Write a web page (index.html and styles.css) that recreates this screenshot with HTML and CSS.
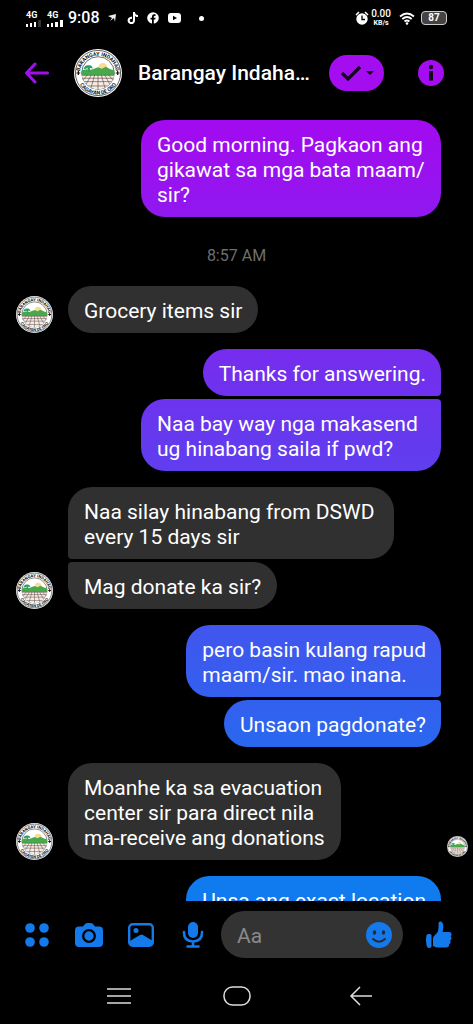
FILE: index.html
```html
<!DOCTYPE html>
<html lang="ceb">
<head>
    <meta charset="UTF-8">
    <meta name="viewport" content="width=device-width, initial-scale=1.0">
    <title>Barangay Indaha…</title>
    <link rel="stylesheet" href="styles.css">
</head>
<body>
    <!-- Seal used for every avatar -->
    <svg class="defs" width="0" height="0" aria-hidden="true">
        <defs>
            <path id="arc-top" d="M12 52A38 38 0 0 1 88 52"/>
            <path id="arc-bottom" d="M5 50A45 45 0 0 0 95 50"/>
            <clipPath id="seal-clip"><circle cx="50" cy="50" r="34"/></clipPath>
        </defs>
        <symbol id="seal" viewBox="0 0 100 100">
            <circle cx="50" cy="50" r="50" fill="#fff"/>
            <circle cx="50" cy="50" r="47" fill="none" stroke="#222" stroke-width="1.500"/>
            <circle cx="50" cy="50" r="34" fill="#fff" stroke="#333" stroke-width="1.500"/>
            <g clip-path="url(#seal-clip)">
                <circle cx="60" cy="38" r="9" fill="#f8dc94"/>
                <path d="M10 54V46l16-4 10 1 14-5 8 3 8-4 10 5 14 4v8z" fill="#48a84c"/>
                <path d="M20 42q2-9 10-8 8-2 9 7l-6-2v9h-4v-8z" fill="#2f9f66"/>
                <path d="M10 54h80v34H10z" fill="#f5ece5"/>
                <path d="M10 55h80M10 61h80M10 68h80M10 77h80M50 54v34M43 54 34 87M57 54l9 33M36 54 18 87M64 54l18 33M28 54 0 87M72 54l28 33" fill="none" stroke="#5a4640" stroke-width="1.300"/>
            </g>
            <path d="M5 50h8M9 46v8M87 50h8M91 46v8" stroke="#111" stroke-width="2.500"/>
            <text class="seal-text"><textPath href="#arc-top" startOffset="50%" text-anchor="middle">BARANGAY INDAHAG</textPath></text>
            <text class="seal-text"><textPath href="#arc-bottom" startOffset="50%" text-anchor="middle">CAGAYAN DE ORO</textPath></text>
        </symbol>
    </svg>

    <div class="status-bar">
        <div class="signal">
            <span>4G</span>
            <svg width="16" height="7" viewBox="0 0 16 7"><path d="M0 4h2v3H0zM4 3h2v4H4zM8 2h2v5H8z" fill="#fff"/><path d="M12 0h3v7h-3z" fill="#333"/></svg>
        </div>
        <div class="signal">
            <span>4G</span>
            <svg width="16" height="7" viewBox="0 0 16 7"><path d="M0 4h2v3H0zM4 3h2v4H4zM8 2h3v5H8zM13 0h3v7h-3z" fill="#fff"/></svg>
        </div>
        <span class="clock">9:08</span>
        <div class="notifications">
            <svg width="10" height="10" viewBox="0 0 10 10"><path d="M0 3 8 1 7 9 6 5 2 8 4 5z" fill="#eee"/></svg>
            <svg width="11" height="12" viewBox="0 0 11 12"><path d="M6 0h2c0 2 1 3 3 3v2c-1 0-2 0-3-1v4.500A3.700 3.700 0 1 1 5 4.800V7a1.600 1.600 0 1 0 1 1.500z" fill="#fff"/></svg>
            <svg width="12" height="12" viewBox="0 0 12 12"><circle cx="6" cy="6" r="5.800" fill="#fff"/><path d="M5 12V7.500H3.500V5.800H5V4.500Q5 2.300 7 2.300h1.500v1.600h-1Q6.800 3.900 6.800 4.600v1.200h1.700l-.3 1.700H6.800V12z" fill="#000"/></svg>
            <svg width="13" height="10" viewBox="0 0 13 10"><rect width="13" height="10" rx="3" fill="#fff"/><path d="M5 2.800 9 5 5 7.200z" fill="#000"/></svg>
        </div>
        <span class="more-dot"></span>
        <div class="status-right">
            <svg width="14" height="14" viewBox="0 0 14 14"><circle cx="7" cy="8" r="5.700" fill="#fff"/><path d="M1 4 4 1M13 4l-3-3" stroke="#fff" stroke-width="1.500"/><path d="M7 4.500V8.500h3" fill="none" stroke="#000" stroke-width="1.300"/></svg>
            <div class="speed"><b>0.00</b><small>KB/s</small></div>
            <svg width="16" height="13" viewBox="0 0 16 13"><path d="M1 4.500Q8-1.500 15 4.500M3.300 7Q8 3 12.700 7M5.500 9.500Q8 7.500 10.500 9.500" fill="none" stroke="#fff" stroke-width="1.800"/><circle cx="8" cy="11.500" r="1.300" fill="#fff"/></svg>
            <div class="battery">87</div>
        </div>
    </div>

    <header class="header">
        <button class="icon-btn" aria-label="Back">
            <svg width="25" height="22" viewBox="0 0 25 22"><path d="M11 2 2.500 11 11 20M3 11h20.500" fill="none" stroke="#a010ec" stroke-width="3" stroke-linecap="round" stroke-linejoin="round"/></svg>
        </button>
        <svg class="avatar avatar-large"><use href="#seal"/></svg>
        <h1 class="title">Barangay Indaha…</h1>
        <button class="done-btn" aria-label="Mark as done">
            <svg width="34" height="18" viewBox="0 0 34 18"><path d="m2 9 6 6L20 3" fill="none" stroke="#14031c" stroke-width="3.200"/><path d="M26 7h8l-4 4z" fill="#14031c"/></svg>
        </button>
        <button class="icon-btn info-btn" aria-label="Info">
            <svg width="26" height="26" viewBox="0 0 26 26"><circle cx="13" cy="13" r="13" fill="#a40df0"/><circle cx="13" cy="7" r="2.200" fill="#14031c"/><path d="M11 11h4v9.500h-4z" fill="#14031c"/></svg>
        </button>
    </header>

    <main class="chat">
        <div class="group out">
            <p class="bubble">Good morning. Pagkaon ang gikawat sa mga bata maam/<wbr>sir?</p>
        </div>

        <time class="timestamp">8:57 AM</time>

        <div class="group in">
            <svg class="avatar"><use href="#seal"/></svg>
            <div class="stack">
                <p class="bubble">Grocery items sir</p>
            </div>
        </div>

        <div class="group out">
            <p class="bubble">Thanks for answering.</p>
            <p class="bubble">Naa bay way nga makasend ug hinabang saila if pwd?</p>
        </div>

        <div class="group in">
            <svg class="avatar"><use href="#seal"/></svg>
            <div class="stack">
                <p class="bubble">Naa silay hinabang from DSWD every 15 days sir</p>
                <p class="bubble">Mag donate ka sir?</p>
            </div>
        </div>

        <div class="group out">
            <p class="bubble">pero basin kulang rapud<br>maam/sir. mao inana.</p>
            <p class="bubble">Unsaon pagdonate?</p>
        </div>

        <div class="group in">
            <svg class="avatar"><use href="#seal"/></svg>
            <div class="stack">
                <p class="bubble">Moanhe ka sa evacuation<br>center sir para direct nila<br>ma-receive ang donations</p>
            </div>
            <svg class="avatar seen"><use href="#seal"/></svg>
        </div>

        <div class="group out">
            <p class="bubble">Unsa ang exact location</p>
        </div>
    </main>

    <form class="composer">
        <button type="button" class="icon-btn" aria-label="More">
            <svg width="24" height="24" viewBox="0 0 24 24" fill="#1479ea"><circle cx="5" cy="5" r="4.800"/><circle cx="19" cy="5" r="4.800"/><circle cx="5" cy="19" r="4.800"/><circle cx="19" cy="19" r="4.800"/></svg>
        </button>
        <button type="button" class="icon-btn" aria-label="Camera">
            <svg width="28" height="24" viewBox="0 0 28 24"><path d="M4 3.500h4L10 1q1-1 2.500-1h3Q17 0 18 1l2 2.500h4q4 0 4 4V20q0 4-4 4H4q-4 0-4-4V7.500q0-4 4-4z" fill="#1479ea"/><circle cx="14" cy="13" r="5.800" fill="#1479ea" stroke="#000" stroke-width="2.300"/></svg>
        </button>
        <button type="button" class="icon-btn" aria-label="Gallery">
            <svg width="26" height="24" viewBox="0 0 26 24"><rect x="1.200" y="1.200" width="23.600" height="21.600" rx="3.500" fill="none" stroke="#1479ea" stroke-width="2.400"/><circle cx="8" cy="7.500" r="2.500" fill="#1479ea"/><path d="M2 18l4-2.500 6-3.500q1.500-.8 3 0l9 5.500v3.500q0 2-2 2H4q-2 0-2-2z" fill="#1479ea"/></svg>
        </button>
        <button type="button" class="icon-btn" aria-label="Voice">
            <svg width="22" height="26" viewBox="0 0 22 26"><rect x="6" y="0" width="10" height="16" rx="5" fill="#1479ea"/><path d="M2 10v1q0 8 9 8.500 9-.5 9-8.500v-1M11 19.500V24M5.500 24.500h11" fill="none" stroke="#1479ea" stroke-width="2.600" stroke-linecap="round"/></svg>
        </button>
        <div class="message-box">
            <input type="text" placeholder="Aa" aria-label="Message">
            <button type="button" class="icon-btn" aria-label="Emoji">
                <svg width="26" height="26" viewBox="0 0 26 26"><circle cx="13" cy="13" r="13" fill="#1479ea"/><ellipse cx="8.500" cy="10.500" rx="1.700" ry="2.200" fill="#252b36"/><ellipse cx="17.500" cy="10.500" rx="1.700" ry="2.200" fill="#252b36"/><path d="M7 17q6 5.500 12 0" fill="none" stroke="#252b36" stroke-width="2" stroke-linecap="round"/></svg>
            </button>
        </div>
        <button type="button" class="icon-btn" aria-label="Like">
            <svg width="26" height="28" viewBox="0 0 26 28"><path d="M2 13h2q1.500 0 1.500 1.500V25q0 2-2 2H3q-2 0-2.500-3Q-.5 18 .5 14.500 1 13 2 13z" fill="#1479ea"/><path d="M8 15l3-3q1.500-2 1.500-6V2.500Q12.500.5 14.300.5q3 0 3 5.500 0 2-.8 5H23q2.600 0 2.600 2.200 0 1.300-1 2 1 .8.900 2.100-.1 1.500-1.300 2.100.7.900.4 2.100-.3 1.300-1.500 1.700.4 3.300-3.600 3.300H13q-3 0-6-1.500V17.500Q7 16 8 15z" fill="#1479ea"/></svg>
        </button>
    </form>

    <nav class="nav-bar">
        <button class="icon-btn recents" aria-label="Recent apps">
            <svg width="24" height="16" viewBox="0 0 24 16"><path d="M0 1h24M0 8h24M0 15h24" stroke="#ddd" stroke-width="1.500"/></svg>
        </button>
        <button class="icon-btn" aria-label="Home">
            <svg width="28" height="20" viewBox="0 0 28 20"><rect x="1" y="1" width="26" height="18" rx="8.500" fill="none" stroke="#ddd" stroke-width="1.500"/></svg>
        </button>
        <button class="icon-btn back" aria-label="Back">
            <svg width="24" height="20" viewBox="0 0 24 20"><path d="M11 1 2 10l9 9M2 10h21" fill="none" stroke="#ddd" stroke-width="1.500"/></svg>
        </button>
    </nav>
</body>
</html>
```
FILE: styles.css
```css
* {
    box-sizing: border-box;
}

body {
    margin: 0;
    height: 100vh;
    display: flex;
    flex-direction: column;
    background-color: #000;
    color: #fff;
    font-family: Roboto, "Liberation Sans", sans-serif;
    overflow: hidden;
}

svg {
    display: block;
    flex-shrink: 0;
}

.defs {
    position: absolute;
}

.seal-text {
    font-size: 11px;
    font-weight: bold;
    fill: #111;
}

.icon-btn {
    display: flex;
    align-items: center;
    justify-content: center;
    padding: 0;
    border: none;
    background: none;
    cursor: pointer;
}

/* Status bar */
.status-bar {
    display: flex;
    align-items: center;
    height: 36px;
    padding: 0 26px;
    flex-shrink: 0;
}

.signal {
    width: 16px;
    margin-right: 5px;
    font-size: 9px;
    line-height: 10px;
    font-weight: bold;
}

.signal span {
    display: block;
}

.clock {
    font-size: 16px;
    line-height: 20px;
    font-weight: 500;
}

.notifications {
    display: flex;
    align-items: center;
    gap: 9px;
    margin-left: 8px;
}

.more-dot {
    width: 5px;
    height: 5px;
    margin-left: 18px;
    border-radius: 50%;
    background-color: #fff;
}

.status-right {
    display: flex;
    align-items: center;
    margin-left: auto;
}

.speed {
    display: flex;
    flex-direction: column;
    align-items: center;
    margin: 0 8px 0 2px;
    font-size: 10px;
    line-height: 10px;
}

.speed b {
    font-weight: 500;
}

.speed small {
    font-size: 7px;
    line-height: 8px;
    font-weight: bold;
}

.battery {
    width: 26px;
    height: 14px;
    margin-left: 6px;
    border: 1px solid #ccc;
    border-radius: 4px;
    background-color: #444;
    font-size: 10px;
    line-height: 12px;
    font-weight: bold;
    text-align: center;
}

/* Header */
.header {
    display: flex;
    align-items: center;
    height: 74px;
    padding: 0 29px 0 24px;
    flex-shrink: 0;
}

.avatar {
    width: 37px;
    height: 37px;
}

.avatar-large {
    width: 48px;
    height: 48px;
    margin: 0 16px 0 25px;
}

.title {
    flex: 1;
    margin: 0;
    font-size: 21px;
    line-height: 28px;
    font-weight: 500;
    white-space: nowrap;
}

.done-btn {
    display: flex;
    align-items: center;
    justify-content: center;
    width: 55px;
    height: 36px;
    padding: 0;
    border: none;
    border-radius: 18px;
    background-color: #a40df0;
    cursor: pointer;
}

.info-btn {
    margin-left: 34px;
}

/* Messages */
.chat {
    flex: 1;
    min-height: 0;
    display: flex;
    flex-direction: column;
    gap: 16px;
    padding: 10px 5px 0 16px;
    overflow: hidden;
}

.group {
    display: flex;
    flex-shrink: 0;
}

.out {
    flex-direction: column;
    align-items: flex-end;
    gap: 3px;
    margin-right: 27px;
}

.in {
    align-items: flex-end;
    gap: 15px;
}

.stack {
    display: flex;
    flex-direction: column;
    align-items: flex-start;
    gap: 3px;
}

.bubble {
    margin: 0;
    padding: 13px 16px 9px;
    border-radius: 24px;
    font-size: 21px;
    line-height: 25px;
}

/* One gradient runs down the whole screen, bubbles show a slice of it */
.out .bubble {
    max-width: 300px;
    padding-right: 15px;
    background: linear-gradient(#a409ef 11%, #107bee 86%) fixed;
}

.in .bubble {
    max-width: 326px;
    background-color: #303030;
}

.out .bubble:not(:last-child) {
    border-bottom-right-radius: 4px;
}

.out .bubble:not(:first-child) {
    border-top-right-radius: 4px;
}

.in .bubble:not(:last-child) {
    border-bottom-left-radius: 4px;
}

.in .bubble:not(:first-child) {
    border-top-left-radius: 4px;
}

.timestamp {
    margin: 14px 0 5px;
    padding-right: 11px;
    color: #6e6e6e;
    font-size: 16px;
    line-height: 18px;
    text-align: center;
}

.seen {
    width: 21px;
    height: 21px;
    margin: 0 0 3px auto;
}

/* Composer */
.composer {
    display: flex;
    align-items: center;
    gap: 20px;
    padding: 10px 18px 10px 21px;
    flex-shrink: 0;
}

.composer > .icon-btn {
    width: 32px;
    height: 32px;
}

.message-box {
    flex: 1;
    min-width: 0;
    display: flex;
    align-items: center;
    height: 47px;
    margin-left: -8px;
    padding: 0 11px 0 16px;
    border-radius: 24px;
    background-color: #333;
}

.message-box input {
    flex: 1;
    min-width: 0;
    padding: 2px 0 0;
    border: none;
    outline: none;
    background: none;
    color: #fff;
    font-family: inherit;
    font-size: 21px;
}

.message-box input::placeholder {
    color: #8a8a8a;
}

/* System navigation */
.nav-bar {
    display: grid;
    grid-template-columns: 1fr auto 1fr;
    column-gap: 92px;
    align-items: center;
    height: 56px;
    flex-shrink: 0;
}

.recents {
    justify-self: end;
}

.back {
    justify-self: start;
    width: 36px;
}
```
